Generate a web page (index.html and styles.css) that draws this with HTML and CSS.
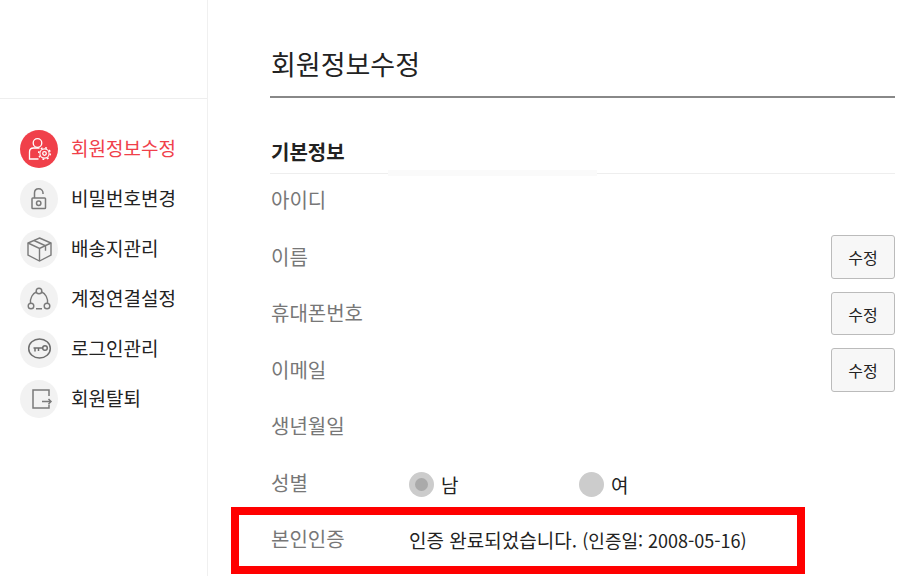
FILE: index.html
```html
<!DOCTYPE html>
<html lang="ko">
<head>
    <meta charset="UTF-8">
    <meta name="viewport" content="width=device-width, initial-scale=1.0">
    <title>회원정보수정</title>
    <link rel="stylesheet" href="styles.css">
</head>
<body>
    <div class="page">
        <aside class="sidebar">
            <ul class="menu">
                <li class="menu-item active">
                    <span class="menu-icon">
                        <svg viewBox="0 0 38 38" width="38" height="38" fill="none" stroke="#fff" stroke-width="1.3">
                            <circle cx="17.5" cy="13" r="4.3"/>
                            <path d="M18.500 29H9.500v-7c0-2.500 1.800-4 4-4h6"/>
                            <circle cx="24.500" cy="23.500" r="1.800"/>
                            <circle cx="24.500" cy="23.500" r="4.600" stroke-width="1.100"/>
                            <circle cx="24.500" cy="23.500" r="5.800" stroke-width="1.500" stroke-dasharray="1.800 2.755"/>
                        </svg>
                    </span>
                    <span class="menu-label">회원정보수정</span>
                </li>
                <li class="menu-item">
                    <span class="menu-icon">
                        <svg viewBox="0 0 38 38" width="38" height="38" fill="none" stroke="#7a7a7a" stroke-width="1.500">
                            <rect x="12" y="18" width="13.500" height="10.500" rx="0.800"/>
                            <path d="M14.500 18v-5c0-2.500 1.800-4.300 4.200-4.300s4.300 1.800 4.300 4.300v1"/>
                            <circle cx="18.700" cy="23.200" r="2.200"/>
                        </svg>
                    </span>
                    <span class="menu-label">비밀번호변경</span>
                </li>
                <li class="menu-item">
                    <span class="menu-icon">
                        <svg viewBox="0 0 38 38" width="38" height="38" fill="none" stroke="#7a7a7a" stroke-width="1.400">
                            <path d="M19.500 8L31 13v12l-11.500 6L8 25V13z"/>
                            <path d="M8 13l11.500 5.500L31 13M19.500 18.500V31"/>
                            <path d="M14 10.500l11.500 5.300v5"/>
                        </svg>
                    </span>
                    <span class="menu-label">배송지관리</span>
                </li>
                <li class="menu-item">
                    <span class="menu-icon">
                        <svg viewBox="0 0 38 38" width="38" height="38" fill="none" stroke="#7a7a7a" stroke-width="1.400">
                            <circle cx="19" cy="11" r="2.800"/>
                            <circle cx="11" cy="26" r="2.800"/>
                            <circle cx="27" cy="26" r="2.800"/>
                            <path d="M16.400 12c-3.900 1.500-6.400 6-5.900 11.200M21.600 12c3.900 1.500 6.400 6 5.900 11.200M16 28.800h6"/>
                        </svg>
                    </span>
                    <span class="menu-label">계정연결설정</span>
                </li>
                <li class="menu-item">
                    <span class="menu-icon">
                        <svg viewBox="0 0 38 38" width="38" height="38" fill="none" stroke="#6e6e6e" stroke-width="1.500">
                            <ellipse cx="19.500" cy="18.500" rx="10.800" ry="9.500"/>
                            <circle cx="25" cy="18" r="2.300"/>
                            <path d="M22.700 18H13.500M15 18v3.500M18.500 18v3"/>
                        </svg>
                    </span>
                    <span class="menu-label">로그인관리</span>
                </li>
                <li class="menu-item">
                    <span class="menu-icon">
                        <svg viewBox="0 0 38 38" width="38" height="38" fill="none" stroke="#7a7a7a" stroke-width="1.500">
                            <path d="M29 16v-6H13v18h16v-3.500"/>
                            <path d="M22 21.500h9M28.500 19l2.500 2.500-2.500 2.500"/>
                        </svg>
                    </span>
                    <span class="menu-label">회원탈퇴</span>
                </li>
            </ul>
        </aside>

        <main class="content">
            <h1 class="page-title">회원정보수정</h1>

            <h2 class="section-title">기본정보</h2>
            <div class="section-glare"></div>

            <div class="form-list">
                <div class="form-row">
                    <span class="form-label">아이디</span>
                </div>
                <div class="form-row">
                    <span class="form-label">이름</span>
                    <button class="edit-btn">수정</button>
                </div>
                <div class="form-row">
                    <span class="form-label">휴대폰번호</span>
                    <button class="edit-btn">수정</button>
                </div>
                <div class="form-row">
                    <span class="form-label">이메일</span>
                    <button class="edit-btn">수정</button>
                </div>
                <div class="form-row">
                    <span class="form-label">생년월일</span>
                </div>
                <div class="form-row">
                    <span class="form-label">성별</span>
                    <label class="radio-option"><span class="radio checked"></span>남</label>
                    <label class="radio-option"><span class="radio"></span>여</label>
                </div>
                <div class="form-row">
                    <span class="form-label">본인인증</span>
                    <span class="form-value">인증 완료되었습니다. <span class="form-date">(인증일: 2008-05-16)</span></span>
                    <div class="highlight"></div>
                </div>
            </div>
        </main>
    </div>
</body>
</html>
```

FILE: styles.css
```css
html, body {
    margin: 0;
    height: 100%;
    overflow: hidden;
    background: #fff;
}
body {
    font-family: 'Noto Sans CJK KR', 'Noto Sans', sans-serif;
    color: #222;
}
.page {
    display: flex;
    height: 576px;
}
.sidebar {
    width: 207px;
    border-right: 1px solid #f0f0f0;
    flex-shrink: 0;
}
.menu {
    list-style: none;
    margin: 98px 0 0;
    padding: 25px 0 0 20px;
    border-top: 1px solid #eee;
}
.menu-item {
    display: flex;
    align-items: center;
    gap: 13px;
    height: 50px;
    font-size: 19px;
    color: #222;
}
.menu-item.active {
    color: #f0404a;
}
.menu-label {
    padding-bottom: 4px;
}
.menu-icon {
    width: 38px;
    height: 38px;
    border-radius: 50%;
    background: #f2f2f2;
    display: block;
}
.menu-item.active .menu-icon {
    background: #f0404a;
}
.menu-icon svg {
    display: block;
}
.content {
    position: relative;
    flex: 1;
    padding: 0 18px 0 62px;
}
.page-title {
    margin: 0;
    padding-top: 45px;
    padding-bottom: 13px;
    height: 38px;
    line-height: 38px;
    font-size: 27px;
    font-weight: 400;
    text-indent: 1px;
    border-bottom: 2px solid #888;
}
.section-title {
    margin: 0;
    padding-top: 38px;
    height: 37px;
    line-height: 32px;
    font-size: 20px;
    font-weight: 700;
    text-indent: 1px;
    border-bottom: 1px solid #eee;
}
.section-glare {
    position: absolute;
    left: 180px;
    top: 170px;
    width: 209px;
    height: 6px;
    background: #fafafa;
}
.form-list {
    margin-top: -1.700px;
}
.form-row {
    position: relative;
    display: flex;
    align-items: center;
    height: 56.500px;
}
.form-label {
    width: 139px;
    flex-shrink: 0;
    padding-bottom: 2px;
    font-size: 20px;
    text-indent: 1px;
    color: #777;
}
.edit-btn {
    margin-left: auto;
    width: 64px;
    height: 43.600px;
    padding: 0;
    border: 1px solid #bbb;
    border-radius: 3px;
    background: #f7f7f7;
    font-family: inherit;
    font-size: 16px;
    color: #222;
}
.radio-option {
    display: flex;
    align-items: center;
    gap: 7px;
    width: 170px;
    margin-top: 3px;
    font-size: 19px;
    color: #222;
}
.radio {
    position: relative;
    width: 25px;
    height: 25px;
    border-radius: 50%;
    background: #ccc;
}
.radio.checked::after {
    content: "";
    position: absolute;
    left: 6px;
    top: 6px;
    width: 13px;
    height: 13px;
    border-radius: 50%;
    background: #aaa;
}
.form-value {
    font-size: 19px;
    color: #222;
}
.form-date {
    font-size: 18px;
}
.highlight {
    position: absolute;
    left: -39px;
    top: -4px;
    width: 574px;
    height: 67px;
    box-sizing: border-box;
    border: 8px solid #f00;
}
```
